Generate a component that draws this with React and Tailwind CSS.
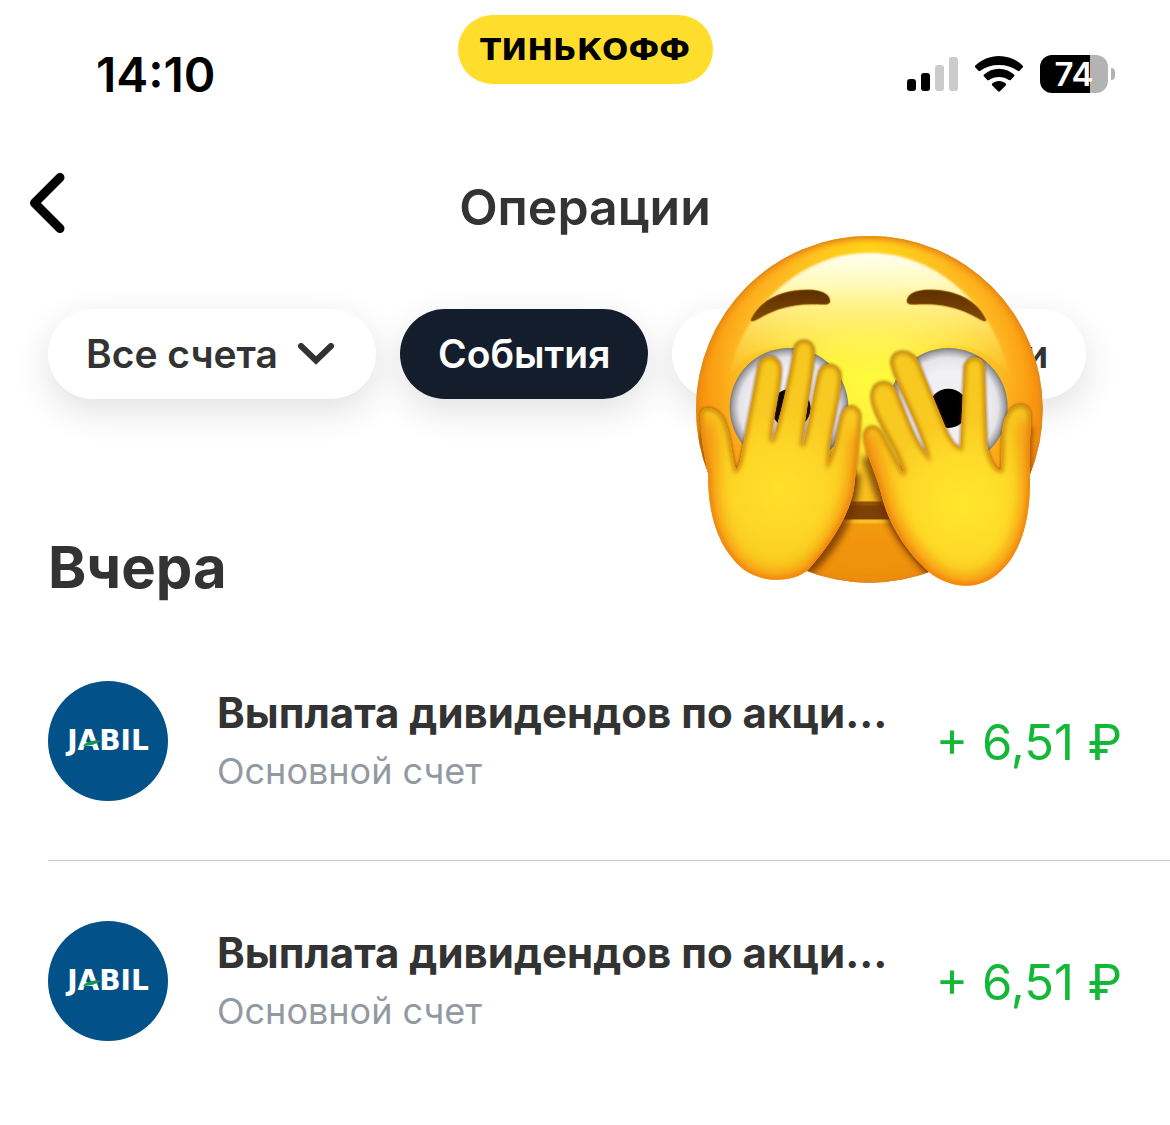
const LEFT_HAND =
  "M62 595 C56 558 92 556 118 578 C150 608 152 690 168 748 C182 735 184 700 190 672 L234 440 C242 396 302 398 304 446 C306 500 276 600 275 664 C296 620 334 440 341 390 C346 350 400 350 403 392 C406 440 372 600 367 678 C386 630 402 500 415 460 C424 420 480 426 483 466 C486 530 446 650 447 722 C466 690 474 610 484 582 C496 544 544 552 542 594 C540 650 530 720 524 790 C516 880 446 980 386 1048 C340 1090 246 1090 190 1048 C110 980 84 880 84 760 C72 700 62 650 62 595 Z";
const RIGHT_HAND =
  "M552 660 C546 612 588 608 604 636 C626 672 644 720 672 762 C664 700 586 610 574 540 C566 478 624 474 644 502 C672 560 702 660 740 702 C728 640 640 480 633 430 C630 386 692 378 716 426 L796 620 C806 645 822 676 841 682 L852 440 C858 404 908 402 914 440 L921 668 C926 712 944 748 962 750 C970 700 956 620 982 580 C1004 544 1048 546 1052 584 C1054 640 1044 700 1050 770 C1052 880 1030 990 962 1054 C900 1112 826 1108 760 1066 C700 1020 630 930 606 830 C592 770 560 710 552 660 Z";

function PeekingFace() {
  return (
    <svg viewBox="0 0 1260 1140" className="block h-[380px] w-[420px]" role="img" aria-label="Эмодзи, закрывающий лицо руками">
      <defs>
        <radialGradient id="face" gradientUnits="userSpaceOnUse" cx="568" cy="470" r="620">
          <stop offset="0" stopColor="#fffb3c" />
          <stop offset="0.22" stopColor="#fff23a" />
          <stop offset="0.45" stopColor="#fed92c" />
          <stop offset="0.64" stopColor="#fdb921" />
          <stop offset="0.8" stopColor="#fb970f" />
          <stop offset="1" stopColor="#e98406" />
        </radialGradient>
        <radialGradient id="crown" gradientUnits="userSpaceOnUse" cx="568" cy="110" r="260">
          <stop offset="0" stopColor="#ffd417" />
          <stop offset="0.5" stopColor="#ffd417" stopOpacity="0.5" />
          <stop offset="1" stopColor="#ffd417" stopOpacity="0" />
        </radialGradient>
        <linearGradient id="shine" gradientUnits="userSpaceOnUse" x1="0" y1="98" x2="0" y2="480">
          <stop offset="0" stopColor="#fffef2" />
          <stop offset="0.25" stopColor="#fffcc4" stopOpacity="0.95" />
          <stop offset="0.6" stopColor="#fff280" stopOpacity="0.6" />
          <stop offset="1" stopColor="#ffec4a" stopOpacity="0" />
        </linearGradient>
        <radialGradient id="eye">
          <stop offset="0" stopColor="#ececee" />
          <stop offset="0.6" stopColor="#f2f2f6" />
          <stop offset="0.84" stopColor="#e4e4e8" />
          <stop offset="0.95" stopColor="#a4a4a8" />
          <stop offset="1" stopColor="#7c7a76" />
        </radialGradient>
        <linearGradient id="brow" x1="0" y1="0" x2="0" y2="1">
          <stop offset="0" stopColor="#5c2f02" />
          <stop offset="1" stopColor="#824a05" />
        </linearGradient>
        <radialGradient id="palmL" gradientUnits="userSpaceOnUse" cx="300" cy="810" r="400">
          <stop offset="0" stopColor="#ffe02a" />
          <stop offset="0.35" stopColor="#fdd626" />
          <stop offset="0.6" stopColor="#f9ca22" />
          <stop offset="1" stopColor="#f7c920" />
        </radialGradient>
        <radialGradient id="palmR" gradientUnits="userSpaceOnUse" cx="850" cy="850" r="420">
          <stop offset="0" stopColor="#ffe62c" />
          <stop offset="0.35" stopColor="#fedb28" />
          <stop offset="0.6" stopColor="#f9ca22" />
          <stop offset="1" stopColor="#f7c920" />
        </radialGradient>
        <linearGradient id="rim" gradientUnits="userSpaceOnUse" x1="0" y1="360" x2="0" y2="1100">
          <stop offset="0" stopColor="#c58a0a" />
          <stop offset="0.45" stopColor="#d08c0a" />
          <stop offset="1" stopColor="#f57e08" />
        </linearGradient>
        <clipPath id="faceClip"><circle cx="568" cy="568" r="520" /></clipPath>
        <clipPath id="leftClip"><path d={LEFT_HAND} /></clipPath>
        <clipPath id="rightClip"><path d={RIGHT_HAND} /></clipPath>
        <filter id="b3" x="-20%" y="-20%" width="140%" height="140%"><feGaussianBlur stdDeviation="3" /></filter>
        <filter id="b6" x="-20%" y="-20%" width="140%" height="140%"><feGaussianBlur stdDeviation="6" /></filter>
        <filter id="b9" x="-20%" y="-20%" width="140%" height="140%"><feGaussianBlur stdDeviation="9" /></filter>
        <filter id="b20" x="-20%" y="-20%" width="140%" height="140%"><feGaussianBlur stdDeviation="20" /></filter>
      </defs>

      <circle cx="568" cy="568" r="520" fill="url(#face)" />
      <g clipPath="url(#faceClip)">
        <circle cx="568" cy="110" r="260" fill="url(#crown)" />
        <ellipse cx="568" cy="1030" rx="420" ry="160" fill="#ee950c" opacity="0.7" filter="url(#b20)" />
        <circle cx="568" cy="568" r="520" fill="none" stroke="#ee8a18" strokeWidth="28" opacity="0.7" filter="url(#b6)" />
        <circle cx="568" cy="568" r="520" fill="none" stroke="#dc8a1c" strokeWidth="8" filter="url(#b3)" />
      </g>
      <path d="M145 480 C180 270 360 98 568 98 C776 98 956 270 991 480 C960 420 900 380 800 376 C700 390 640 440 568 480 C496 440 430 390 330 376 C240 380 180 410 145 480 Z" fill="url(#shine)" filter="url(#b3)" />

      <path d="M214 296 C250 225 330 206 400 210 C435 214 452 228 450 246 C446 258 425 252 400 253 C320 252 270 276 228 300 C217 306 210 304 214 296 Z" fill="url(#brow)" stroke="#b87908" strokeOpacity="0.4" strokeWidth="5" />
      <path d="M917 296 C881 225 801 206 731 210 C696 214 679 228 681 246 C685 258 706 252 731 253 C811 252 861 276 903 300 C914 306 921 304 917 296 Z" fill="url(#brow)" stroke="#b87908" strokeOpacity="0.4" strokeWidth="5" />

      <circle cx="327" cy="562" r="178" fill="url(#eye)" />
      <circle cx="805" cy="562" r="178" fill="url(#eye)" />
      <circle cx="333" cy="565" r="59" fill="#000" />
      <circle cx="805" cy="565" r="59" fill="#000" />

      <path d="M540 690 L600 800 L610 845 L515 845 Z" fill="#f3bd1e" opacity="0.5" filter="url(#b9)" />
      <rect x="440" y="845" width="260" height="55" fill="#7c4104" />
      <rect x="440" y="845" width="260" height="12" fill="#9b5a08" opacity="0.7" />
      <rect x="440" y="898" width="260" height="12" fill="#ffc52a" opacity="0.8" />

      <g clipPath="url(#faceClip)">
        <path d={LEFT_HAND} fill="none" stroke="#7a3a00" strokeWidth="7" opacity="0.5" filter="url(#b3)" />
        <path d={RIGHT_HAND} fill="none" stroke="#7a3a00" strokeWidth="7" opacity="0.5" filter="url(#b3)" />
        <path d="M526 760 C520 870 470 970 380 1055" fill="none" stroke="#6d2f00" strokeWidth="34" opacity="0.75" filter="url(#b9)" />
        <path d="M560 710 C594 800 620 940 770 1070" fill="none" stroke="#6d2f00" strokeWidth="30" opacity="0.75" filter="url(#b9)" />
        <path d="M60 640 C66 700 76 740 82 800 M1056 620 C1048 680 1050 730 1054 800" fill="none" stroke="#a04e00" strokeWidth="14" opacity="0.6" filter="url(#b6)" />
      </g>

      <path d={LEFT_HAND} fill="url(#palmL)" />
      <g clipPath="url(#leftClip)">
        <path d={LEFT_HAND} fill="none" stroke="url(#rim)" strokeWidth="16" filter="url(#b6)" />
        <path d="M70 600 C90 700 80 780 84 800 C90 1000 190 1090 300 1085 C400 1080 490 960 530 790 L544 640" fill="none" stroke="#f5860c" strokeWidth="56" opacity="0.8" filter="url(#b20)" />
      </g>
      <path d={RIGHT_HAND} fill="url(#palmR)" />
      <g clipPath="url(#rightClip)">
        <path d={RIGHT_HAND} fill="none" stroke="url(#rim)" strokeWidth="16" filter="url(#b6)" />
        <path d="M555 640 L600 820 C650 980 760 1100 860 1100 C980 1090 1050 960 1052 800 L1046 600" fill="none" stroke="#f5860c" strokeWidth="56" opacity="0.8" filter="url(#b20)" />
      </g>
    </svg>
  );
}

function StatusBar() {
  return (
    <div className="grid grid-cols-[1fr_auto_1fr] items-start pt-[15px]">
      <time className="pt-[32px] pl-[96px] text-[48px] leading-[56px] font-semibold text-black">14:10</time>
      <div className="flex h-[69px] w-[255px] items-center justify-center rounded-full bg-[#ffdd2d] font-['DejaVu_Sans',sans-serif] text-[31px] font-bold text-black">
        ТИНЬКОФФ
      </div>
      <div className="flex items-center justify-end gap-[17px] pt-[40px] pr-[55px]">
        <svg viewBox="0 0 51 34" className="h-[34px] w-[51px]" aria-hidden="true">
          <rect x="0" y="22" width="9" height="12" rx="3" />
          <rect x="14" y="16" width="9" height="18" rx="3" />
          <rect x="28" y="8" width="9" height="26" rx="3" fill="#cbcbcb" />
          <rect x="42" y="0" width="9" height="34" rx="3" fill="#cbcbcb" />
        </svg>
        <svg viewBox="0 0 48 36" className="h-[36px] w-[48px]" aria-hidden="true">
          <path d="M24 0 C33 0 41.500 3.500 47.600 9.600 C48.200 10.200 48.200 11 47.600 11.600 L44.500 14.800 C44 15.300 43.200 15.300 42.600 14.800 C37.600 11 31 9 24 9 C17 9 10.400 11 5.400 14.800 C4.800 15.300 4 15.300 3.500 14.800 L.4 11.600 C-.2 11 -.2 10.200 .4 9.600 C6.500 3.500 15 0 24 0 Z" />
          <path d="M24 12.700 C29.700 12.700 35 14.900 39 18.600 C39.600 19.200 39.600 20 39 20.600 L35.700 23.900 C35.100 24.500 34.400 24.400 33.800 23.900 C31.100 22 27.700 21 24 21 C20.300 21 16.900 22 14.200 23.900 C13.600 24.400 12.900 24.500 12.300 23.900 L9 20.600 C8.400 20 8.400 19.200 9 18.600 C13 14.900 18.300 12.700 24 12.700 Z" />
          <path d="M24 25 C26.500 25 29 26 30.700 27.500 C31.300 28.100 31.300 28.900 30.700 29.500 L25 35.200 C24.400 35.800 23.600 35.800 23 35.200 L17.300 29.500 C16.700 28.900 16.700 28.100 17.300 27.500 C19 26 21.500 25 24 25 Z" />
        </svg>
        <div className="flex items-center gap-[3px]">
          <div className="flex h-[38px] w-[68px] items-center justify-center rounded-[12px] bg-linear-to-r from-black from-74% to-[#b3b3b3] to-74% text-[33px] leading-[38px] font-semibold text-white">
            74
          </div>
          <div className="h-[12px] w-[4px] rounded-r-full bg-[#b3b3b3]" />
        </div>
      </div>
    </div>
  );
}

function JabilLogo() {
  return (
    <div className="relative flex size-[120px] shrink-0 items-center justify-center rounded-full bg-[#025189] font-['DejaVu_Sans',sans-serif] text-[28px] font-bold text-white">
      JABIL
      <svg viewBox="0 0 20 6" className="absolute top-[59px] left-[35px] h-[6px] w-[20px]" aria-hidden="true">
        <path d="M0 6 C3 1 9 0 20 .5 C15 2 11 6 0 6 Z" fill="#129350" />
      </svg>
    </div>
  );
}

const chip = "flex h-[90px] shrink-0 items-center rounded-full text-[39px] font-semibold shadow-[0_12px_36px_rgba(0,0,0,0.12)]";

const operations = [
  { id: 1, title: "Выплата дивидендов по акци…", account: "Основной счет", amount: "+ 6,51 ₽" },
  { id: 2, title: "Выплата дивидендов по акци…", account: "Основной счет", amount: "+ 6,51 ₽" },
];

export default function App() {
  return (
    <main className="relative min-h-screen overflow-hidden bg-white font-[Inter,sans-serif] text-[#333333]">
      <StatusBar />

      <header className="mt-[63px] grid grid-cols-[1fr_auto_1fr] items-start">
        <button type="button" aria-label="Назад" className="mt-[7px] ml-[30px] w-[36px]">
          <svg viewBox="0 0 36 60" className="h-[60px] w-[36px]" fill="none" stroke="#000" strokeWidth="9" strokeLinecap="round" strokeLinejoin="round">
            <path d="M30 4.500 L4.500 30 L30 55.500" />
          </svg>
        </button>
        <h1 className="text-[50px] leading-[82px] font-semibold">Операции</h1>
      </header>

      <nav className="mt-[61px] flex gap-[24px] pl-[48px]">
        <button type="button" className={`${chip} gap-[20px] bg-white pr-[42px] pl-[38px]`}>
          Все счета
          <svg viewBox="0 0 36 22" className="h-[22px] w-[36px]" fill="none" stroke="#333" strokeWidth="6" strokeLinecap="round">
            <path d="M3 3 L18 17.500 L33 3" />
          </svg>
        </button>
        <button type="button" className={`${chip} bg-[#141d2b] px-[38px] text-white`}>События</button>
        <button type="button" className={`${chip} w-[414px] justify-end bg-white px-[38px]`}>и</button>
      </nav>

      <section>
        <h2 className="mt-[132px] pl-[48px] text-[58px] leading-[72px] font-bold">Вчера</h2>
        <ul className="mt-[18px] pl-[48px]">
          {operations.map((op) => (
            <li key={op.id} className="flex items-center gap-[49px] border-b border-[#c8c8ca] pt-[60px] pr-[48px] pb-[59px] last:border-b-0">
              <JabilLogo />
              <div className="min-w-0 flex-1">
                <p className="text-[42px] leading-[60px] font-bold whitespace-nowrap">{op.title}</p>
                <p className="text-[36px] leading-[56px] text-[#9299a2]">{op.account}</p>
              </div>
              <p className="pt-[4px] text-[49px] leading-[60px] whitespace-nowrap text-[#12b836]">{op.amount}</p>
            </li>
          ))}
        </ul>
      </section>

      <div className="pointer-events-none absolute top-[220px] left-[680px]">
        <PeekingFace />
      </div>
    </main>
  );
}
